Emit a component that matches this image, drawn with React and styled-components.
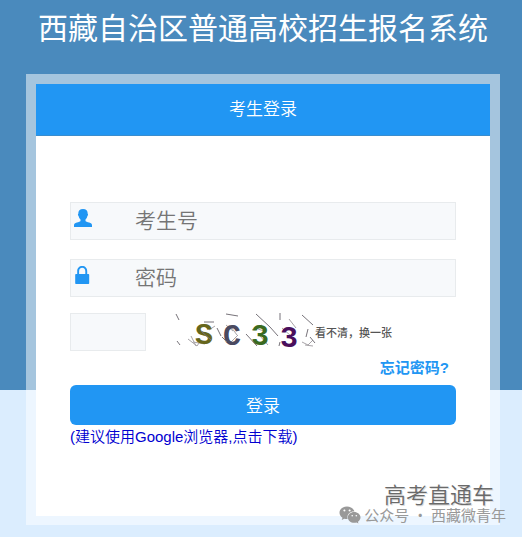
import React, { useState } from 'react';
import styled, { createGlobalStyle } from 'styled-components';
import { FaWeixin } from 'react-icons/fa';

const noiseDark = 'M14 9l3 6M15 36l3 4M64 9l12 2M94 9l14 13M118 8v7M140 10l11 10M39 26l10 9M55 23l4 8M84 29l11 12M146 24l-2 8M148 32l5 6M60 32l5 5M118 37l-1 4M108 22l8 9M42 17h10';
const noiseLight = 'M26 34l9 7l2-3M29 31l5 10M31 37l12 2M69 22l6 8M76 30l-8 8M100 20l-10 5M127 14l7 9M140 37l6 3l5-5M143 40l8 1M47 25l6-4M98 31l8 9M64 20l7 6M96 24l9 3M120 23l9 8';

const letters = [
  { char: 'S', x: 33, y: 39, fill: '#66661c' },
  { char: 'C', x: 61, y: 40, fill: '#4a4a60' },
  { char: '3', x: 89, y: 40, fill: '#3a6a20' },
  { char: '3', x: 118, y: 42, fill: '#4a0f5c' },
];

const Captcha = () => (
  <CaptchaImage viewBox="12 8 140 38" role="img" aria-label="验证码">
    <path d={noiseLight} fill="none" stroke="#a8a4a8" strokeWidth="1" />
    {letters.map((l) => (
      <text key={l.x} x={l.x} y={l.y} fill={l.fill}>{l.char}</text>
    ))}
    <path d={noiseDark} fill="none" stroke="#77737a" strokeWidth="1" />
  </CaptchaImage>
);

const UserIcon = () => (
  <Icon viewBox="0 0 18 18" aria-hidden="true">
    <path d="M9 0C5.800 0 4.200 1.800 4.300 4.700c-.6.300-.4 1.800.3 2.300.3 1.500.9 2.700 1.900 3.500v1.500c-.4.700-1.900 1-3.600 1.500C.9 14.100 0 14.800 0 16.300V18h18v-1.700c0-1.500-.9-2.200-2.900-2.800-1.700-.5-3.200-.8-3.600-1.500v-1.500c1-.8 1.600-2 1.900-3.500.7-.5.9-2 .3-2.300C13.800 1.800 12.200 0 9 0z" />
  </Icon>
);

const LockIcon = () => (
  <Icon viewBox="0 0 18 18" aria-hidden="true">
    <path d="M3.200 8V5.200C3.200 2 5.200 0 8.200 0s5 2 5 5.200V8h1.300c.4 0 .7.300.7.700v8.600c0 .4-.3.700-.7.700H1.900c-.4 0-.7-.3-.7-.7V8.700c0-.4.3-.7.700-.7h1.300zm1.900 0h6.200V5.300c0-2.200-1.200-3.500-3.100-3.500S5.100 3.100 5.100 5.300V8z" />
  </Icon>
);

export default function App() {
  const [values, setValues] = useState({ number: '', password: '', code: '' });
  const handleChange = (e) => {
    setValues({ ...values, [e.target.name]: e.target.value });
  };

  return (
    <>
      <GlobalStyle />
      <Page>
        <Title>西藏自治区普通高校招生报名系统</Title>
        <Frame>
          <Panel>
            <PanelHeader>考生登录</PanelHeader>
            <Form onSubmit={(e) => e.preventDefault()}>
              <Field>
                <UserIcon />
                <FieldInput type="text" name="number" aria-label="考生号" placeholder="考生号" value={values.number} onChange={handleChange} />
              </Field>
              <Field>
                <LockIcon />
                <FieldInput type="password" name="password" aria-label="密码" placeholder="密码" value={values.password} onChange={handleChange} />
              </Field>
              <CodeRow>
                <CodeInput type="text" name="code" aria-label="验证码" value={values.code} onChange={handleChange} />
                <Captcha />
                <RefreshLink href="#">看不清，换一张</RefreshLink>
              </CodeRow>
              <ForgotLink href="#">忘记密码?</ForgotLink>
              <SubmitButton type="submit">登录</SubmitButton>
              <DownloadLink href="#">(建议使用Google浏览器,点击下载)</DownloadLink>
            </Form>
          </Panel>
        </Frame>
        <Watermark>
          <Brand>高考直通车</Brand>
          <Account>
            <FaWeixin size={22} aria-hidden="true" />
            <span>公众号 · 西藏微青年</span>
          </Account>
        </Watermark>
      </Page>
    </>
  );
}

const GlobalStyle = createGlobalStyle`
  * {
    box-sizing: border-box;
  }
  body {
    margin: 0;
    background: #dbedfe;
    font-family: "Liberation Sans", "Noto Sans CJK SC", sans-serif;
  }
  input, button {
    font-family: inherit;
  }
`;

const Page = styled.div`
  position: relative;
  min-height: 100vh;
  padding: 8px 22px 12px 26px;
  background: linear-gradient(#4a8abd 390px, #dbedfe 390px);
`;

const Title = styled.h1`
  margin: 0 0 24px;
  color: #fff;
  font-size: 30px;
  font-weight: 400;
  line-height: 42px;
  text-align: center;
  white-space: nowrap;
`;

const Frame = styled.main`
  padding: 10px 10px 9px;
  background: rgba(255, 255, 255, 0.5);
`;

const Panel = styled.section`
  background: #fff;
`;

const PanelHeader = styled.h2`
  margin: 0;
  border-bottom: 1px solid #3a8dce;
  background: #2196f3;
  color: #fff;
  font-size: 17px;
  font-weight: 350;
  line-height: 51px;
  text-align: center;
`;

const Form = styled.form`
  display: flex;
  flex-direction: column;
  padding: 66px 34px 67px;
`;

const Field = styled.label`
  display: flex;
  height: 38px;
  margin-bottom: 19px;
  padding-left: 3px;
  border: 1px solid #e8ebed;
  background: #f7f9fb;
  &:nth-of-type(2) {
    margin-bottom: 16px;
  }
`;

const Icon = styled.svg`
  flex: none;
  width: 18px;
  height: 18px;
  margin-top: 6px;
  fill: #2196f3;
`;

const FieldInput = styled.input`
  flex: 1;
  min-width: 0;
  padding: 0 10px 0 43px;
  border: 0;
  outline: none;
  background: transparent;
  color: #333;
  font-size: 21px;
  font-weight: 350;
  &::placeholder {
    color: #757575;
  }
`;

const CodeRow = styled.div`
  display: flex;
  align-items: center;
  height: 38px;
`;

const CodeInput = styled.input`
  width: 76px;
  height: 38px;
  margin-right: 28px;
  padding: 0 8px;
  border: 1px solid #e8ebed;
  outline: none;
  background: #f7f9fb;
  font-size: 21px;
`;

const CaptchaImage = styled.svg`
  flex: none;
  width: 140px;
  height: 38px;
  overflow: visible;
  text {
    font-family: "Liberation Mono", monospace;
    font-size: 30px;
    font-weight: 700;
  }
`;

const RefreshLink = styled.a`
  margin-left: 1px;
  color: #555;
  font-size: 11px;
  font-weight: 500;
  text-decoration: none;
  white-space: nowrap;
`;

const ForgotLink = styled.a`
  align-self: flex-end;
  margin: 5px 7px 5px 0;
  color: #2196f3;
  font-size: 15px;
  font-weight: 700;
  line-height: 24px;
  text-decoration: none;
`;

const SubmitButton = styled.button`
  height: 40px;
  padding: 0 0 2px;
  border: 0;
  border-radius: 6px;
  background: #2196f3;
  color: #fff;
  font-size: 17px;
  font-weight: 350;
  cursor: pointer;
`;

const DownloadLink = styled.a`
  align-self: flex-start;
  color: #0000d0;
  font-size: 15px;
  font-weight: 350;
  line-height: 24px;
  text-decoration: none;
`;

/* stamped over the lower right corner of the page */
const Watermark = styled.div`
  position: absolute;
  right: 16px;
  bottom: 11px;
  display: flex;
  flex-direction: column;
  align-items: flex-end;
`;

const Brand = styled.span`
  margin-right: 12px;
  color: #6a6a6a;
  font-size: 22px;
  font-weight: 350;
  line-height: 16px;
  text-shadow: 1px 1px 0 #ddd;
`;

const Account = styled.span`
  display: flex;
  align-items: center;
  gap: 3px;
  color: #999;
  font-family: "Noto Sans CJK SC", sans-serif;
  font-size: 15px;
  line-height: 20px;
`;
